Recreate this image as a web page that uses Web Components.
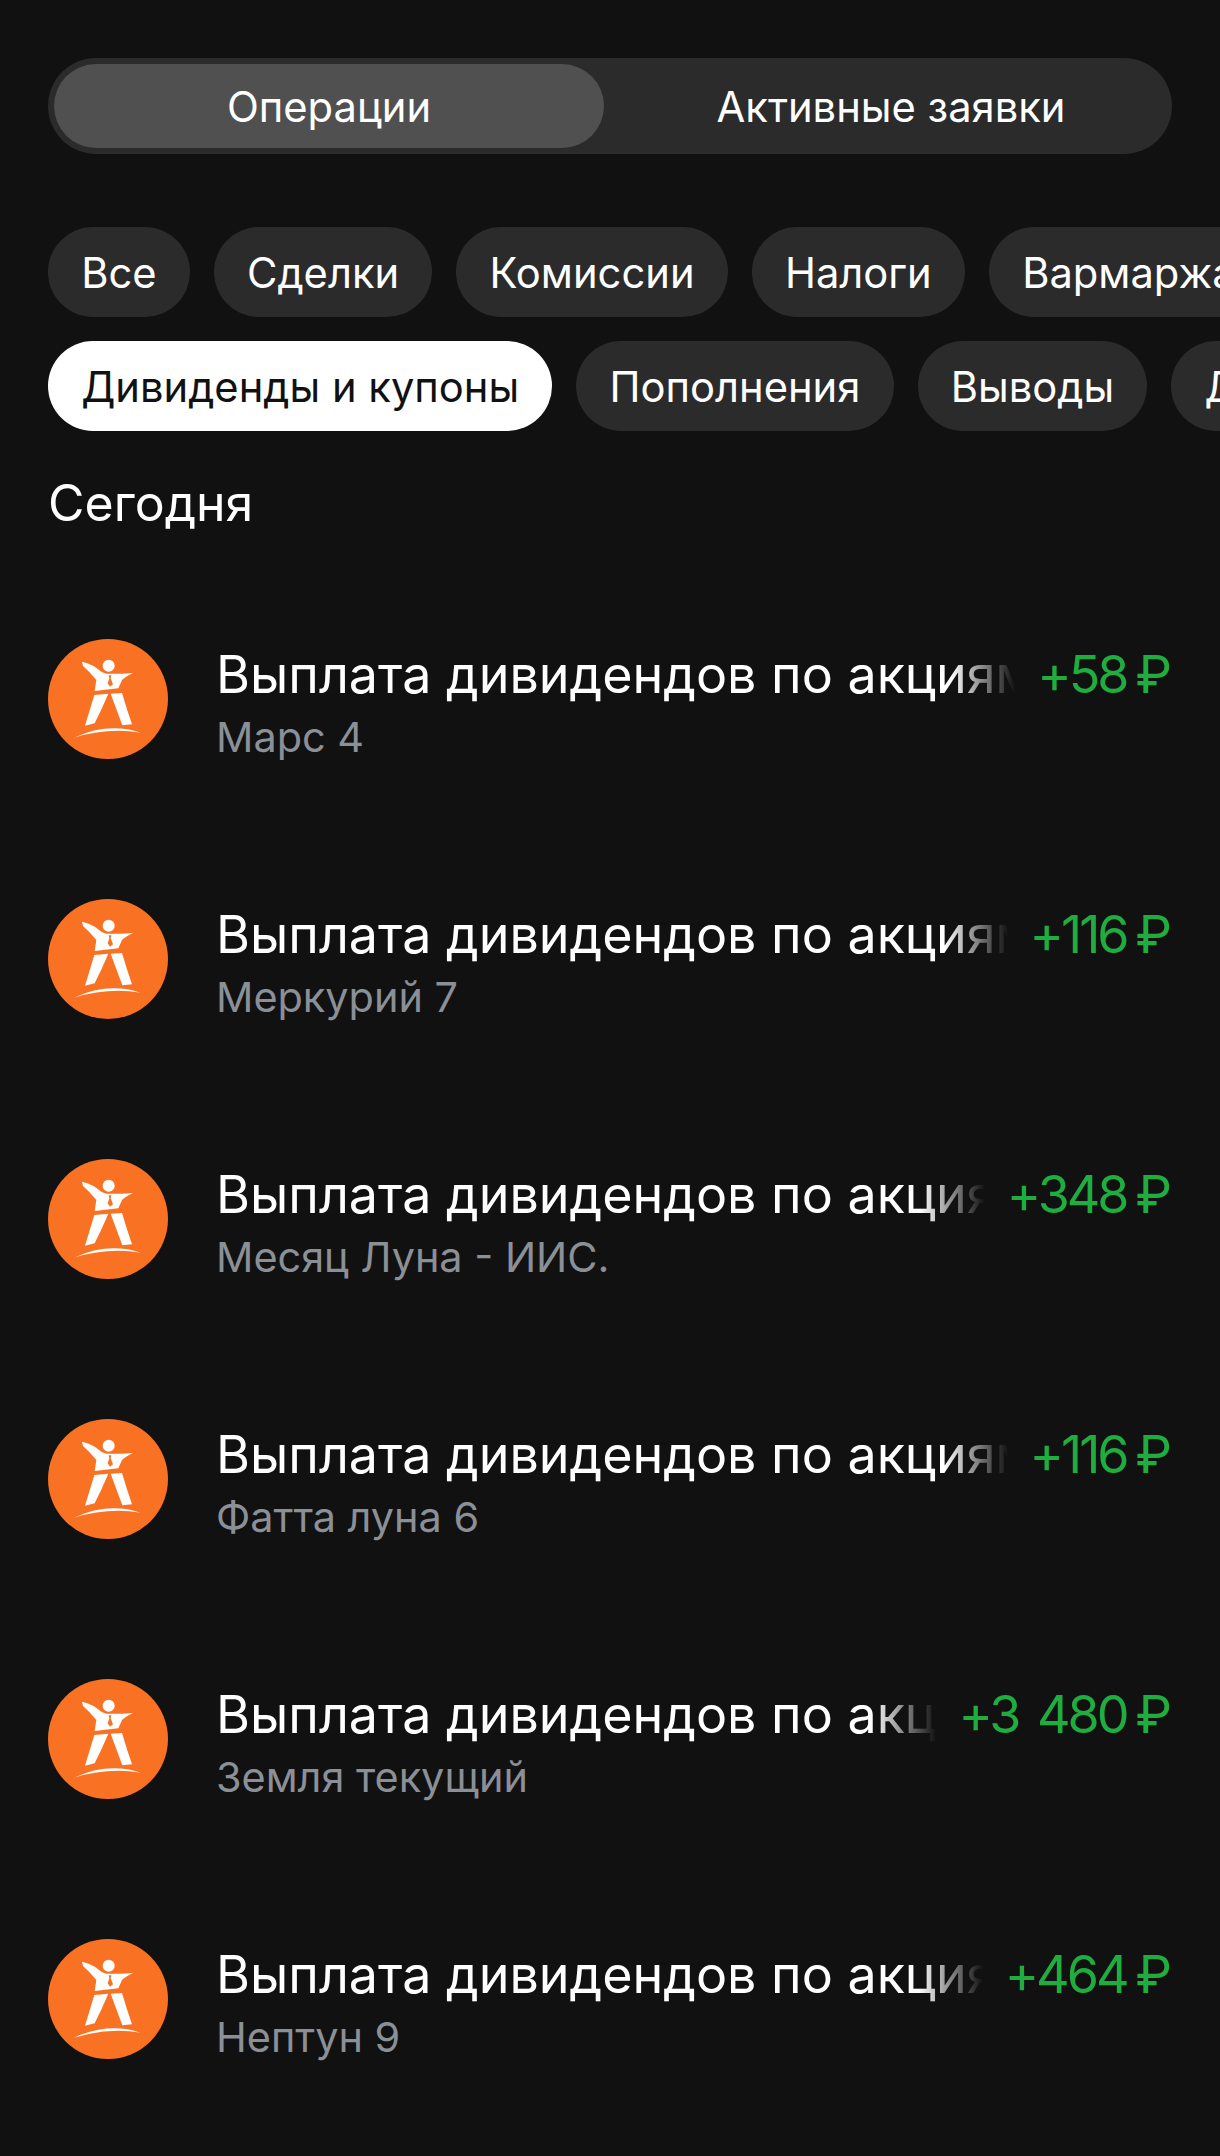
<!DOCTYPE html>
<html lang="ru">
<head>
<meta charset="utf-8">
<title>Операции</title>
<style>
  html, body { margin: 0; background: #111112; }
  body { width: 1220px; height: 2156px; overflow: hidden; font-family: Inter, Roboto, sans-serif; color: #fff; }
  .page { display: flex; flex-direction: column; }
</style>
</head>
<body>
<div class="page">
  <seg-tabs>
    <seg-tab active>Операции</seg-tab>
    <seg-tab>Активные заявки</seg-tab>
  </seg-tabs>
  <chip-row style="margin-top:73px">
    <filter-chip>Все</filter-chip>
    <filter-chip>Сделки</filter-chip>
    <filter-chip>Комиссии</filter-chip>
    <filter-chip>Налоги</filter-chip>
    <filter-chip>Вармаржа</filter-chip>
  </chip-row>
  <chip-row style="margin-top:24px">
    <filter-chip active>Дивиденды и купоны</filter-chip>
    <filter-chip>Пополнения</filter-chip>
    <filter-chip>Выводы</filter-chip>
    <filter-chip>Другое</filter-chip>
  </chip-row>
  <day-title>Сегодня</day-title>
  <op-row amount="+58" account="Марс 4"></op-row>
  <op-row amount="+116" account="Меркурий 7"></op-row>
  <op-row amount="+348" account="Месяц Луна - ИИС."></op-row>
  <op-row amount="+116" account="Фатта луна 6"></op-row>
  <op-row amount="+3 480" account="Земля текущий"></op-row>
  <op-row amount="+464" account="Нептун 9"></op-row>
</div>

<script>
class SegTabs extends HTMLElement {
  connectedCallback() {
    const shadow = this.attachShadow({mode: 'open'});
    shadow.innerHTML = `
      <style>
        :host {
          display: flex;
          box-sizing: border-box;
          width: 1124px;
          height: 96px;
          margin: 58px 0 0 48px;
          padding: 6px;
          border-radius: 48px;
          background: #2b2b2c;
        }
      </style>
      <slot></slot>`;
  }
}
customElements.define('seg-tabs', SegTabs);

class SegTab extends HTMLElement {
  connectedCallback() {
    const shadow = this.attachShadow({mode: 'open'});
    shadow.innerHTML = `
      <style>
        :host {
          flex: 1;
          display: flex;
          align-items: center;
          justify-content: center;
          padding: 2px 0 0 12px;
          border-radius: 42px;
          font-size: 41.7px;
          color: #fff;
        }
        :host([active]) { flex: none; width: 550px; padding: 2px 0 0; background: #505051; }
      </style>
      <slot></slot>`;
  }
}
customElements.define('seg-tab', SegTab);

class ChipRow extends HTMLElement {
  connectedCallback() {
    const shadow = this.attachShadow({mode: 'open'});
    shadow.innerHTML = `
      <style>
        :host {
          display: flex;
          gap: 24px;
          padding-left: 48px;
          overflow: hidden;
        }
      </style>
      <slot></slot>`;
  }
}
customElements.define('chip-row', ChipRow);

class FilterChip extends HTMLElement {
  connectedCallback() {
    const shadow = this.attachShadow({mode: 'open'});
    shadow.innerHTML = `
      <style>
        :host {
          flex: none;
          display: flex;
          align-items: center;
          box-sizing: border-box;
          height: 90px;
          padding: 2px 33.2px 0;
          border-radius: 45px;
          background: #2b2b2c;
          color: #fff;
          font-size: 41.7px;
          white-space: nowrap;
        }
        :host([active]) { background: #fff; color: #111112; }
      </style>
      <slot></slot>`;
  }
}
customElements.define('filter-chip', FilterChip);

class DayTitle extends HTMLElement {
  connectedCallback() {
    const shadow = this.attachShadow({mode: 'open'});
    shadow.innerHTML = `
      <style>
        :host {
          display: block;
          margin: 43px 0 37px 48px;
          height: 58px;
          line-height: 58px;
          font-size: 50px;
          color: #fff;
        }
      </style>
      <slot></slot>`;
  }
}
customElements.define('day-title', DayTitle);

// same logo on every row
const logo = `
  <svg viewBox="25 27 360 360" width="120" height="120">
    <circle cx="205" cy="207" r="180" fill="#f97224"/>
    <circle cx="207" cy="107" r="18" fill="#fff"/>
    <path fill="#fff" d="M127 95 Q160 102 186 126 L200 131 L228 131 Q255 132 280 129 Q258 139 247 150 L236 175 L165 183 L170 150 Q150 125 130 108 Z"/>
    <path fill="#f97224" d="M207 136 L215 136 L213 145 L220 163 L211 170 L204 160 L209 145 Z"/>
    <path fill="#fff" d="M164 195 L206 191 Q185 240 165 280 L136 287 Z"/>
    <path fill="#fff" d="M213 191 L247 189 Q262 240 277 283 L248 286 Z"/>
    <path fill="#fff" d="M103 323 Q205 276 303 308 Q205 292 103 323 Z"/>
  </svg>`;

class OpRow extends HTMLElement {
  connectedCallback() {
    const shadow = this.attachShadow({mode: 'open'});
    shadow.innerHTML = `
      <style>
        :host {
          display: flex;
          align-items: center;
          height: 260px;
          padding: 0 48px;
          gap: 48px;
        }
        svg { flex: none; display: block; }
        .main { flex: 1; min-width: 0; display: flex; flex-direction: column; padding-top: 9px; }
        .top { display: flex; gap: 22px; align-items: baseline; margin-bottom: 1px; }
        .title {
          flex: 1;
          min-width: 0;
          overflow: hidden;
          white-space: nowrap;
          font-size: 52px;
          line-height: 66px;
          -webkit-mask-image: linear-gradient(to left, transparent 0, #000 64px);
          mask-image: linear-gradient(to left, transparent 0, #000 64px);
        }
        .amount { flex: none; font-size: 52px; letter-spacing: -3px; word-spacing: 7px; line-height: 66px; color: #1fad3f; white-space: nowrap; }
        .rub { margin-left: 9px; letter-spacing: 0; }
        .account { font-size: 41.4px; line-height: 56px; color: #8b8f96; }
      </style>
      ${logo}
      <div class="main">
        <div class="top">
          <div class="title">Выплата дивидендов по акциям</div>
          <div class="amount">${this.getAttribute('amount')}<span class="rub">₽</span></div>
        </div>
        <div class="account">${this.getAttribute('account')}</div>
      </div>`;
  }
}
customElements.define('op-row', OpRow);
</script>
</body>
</html>
